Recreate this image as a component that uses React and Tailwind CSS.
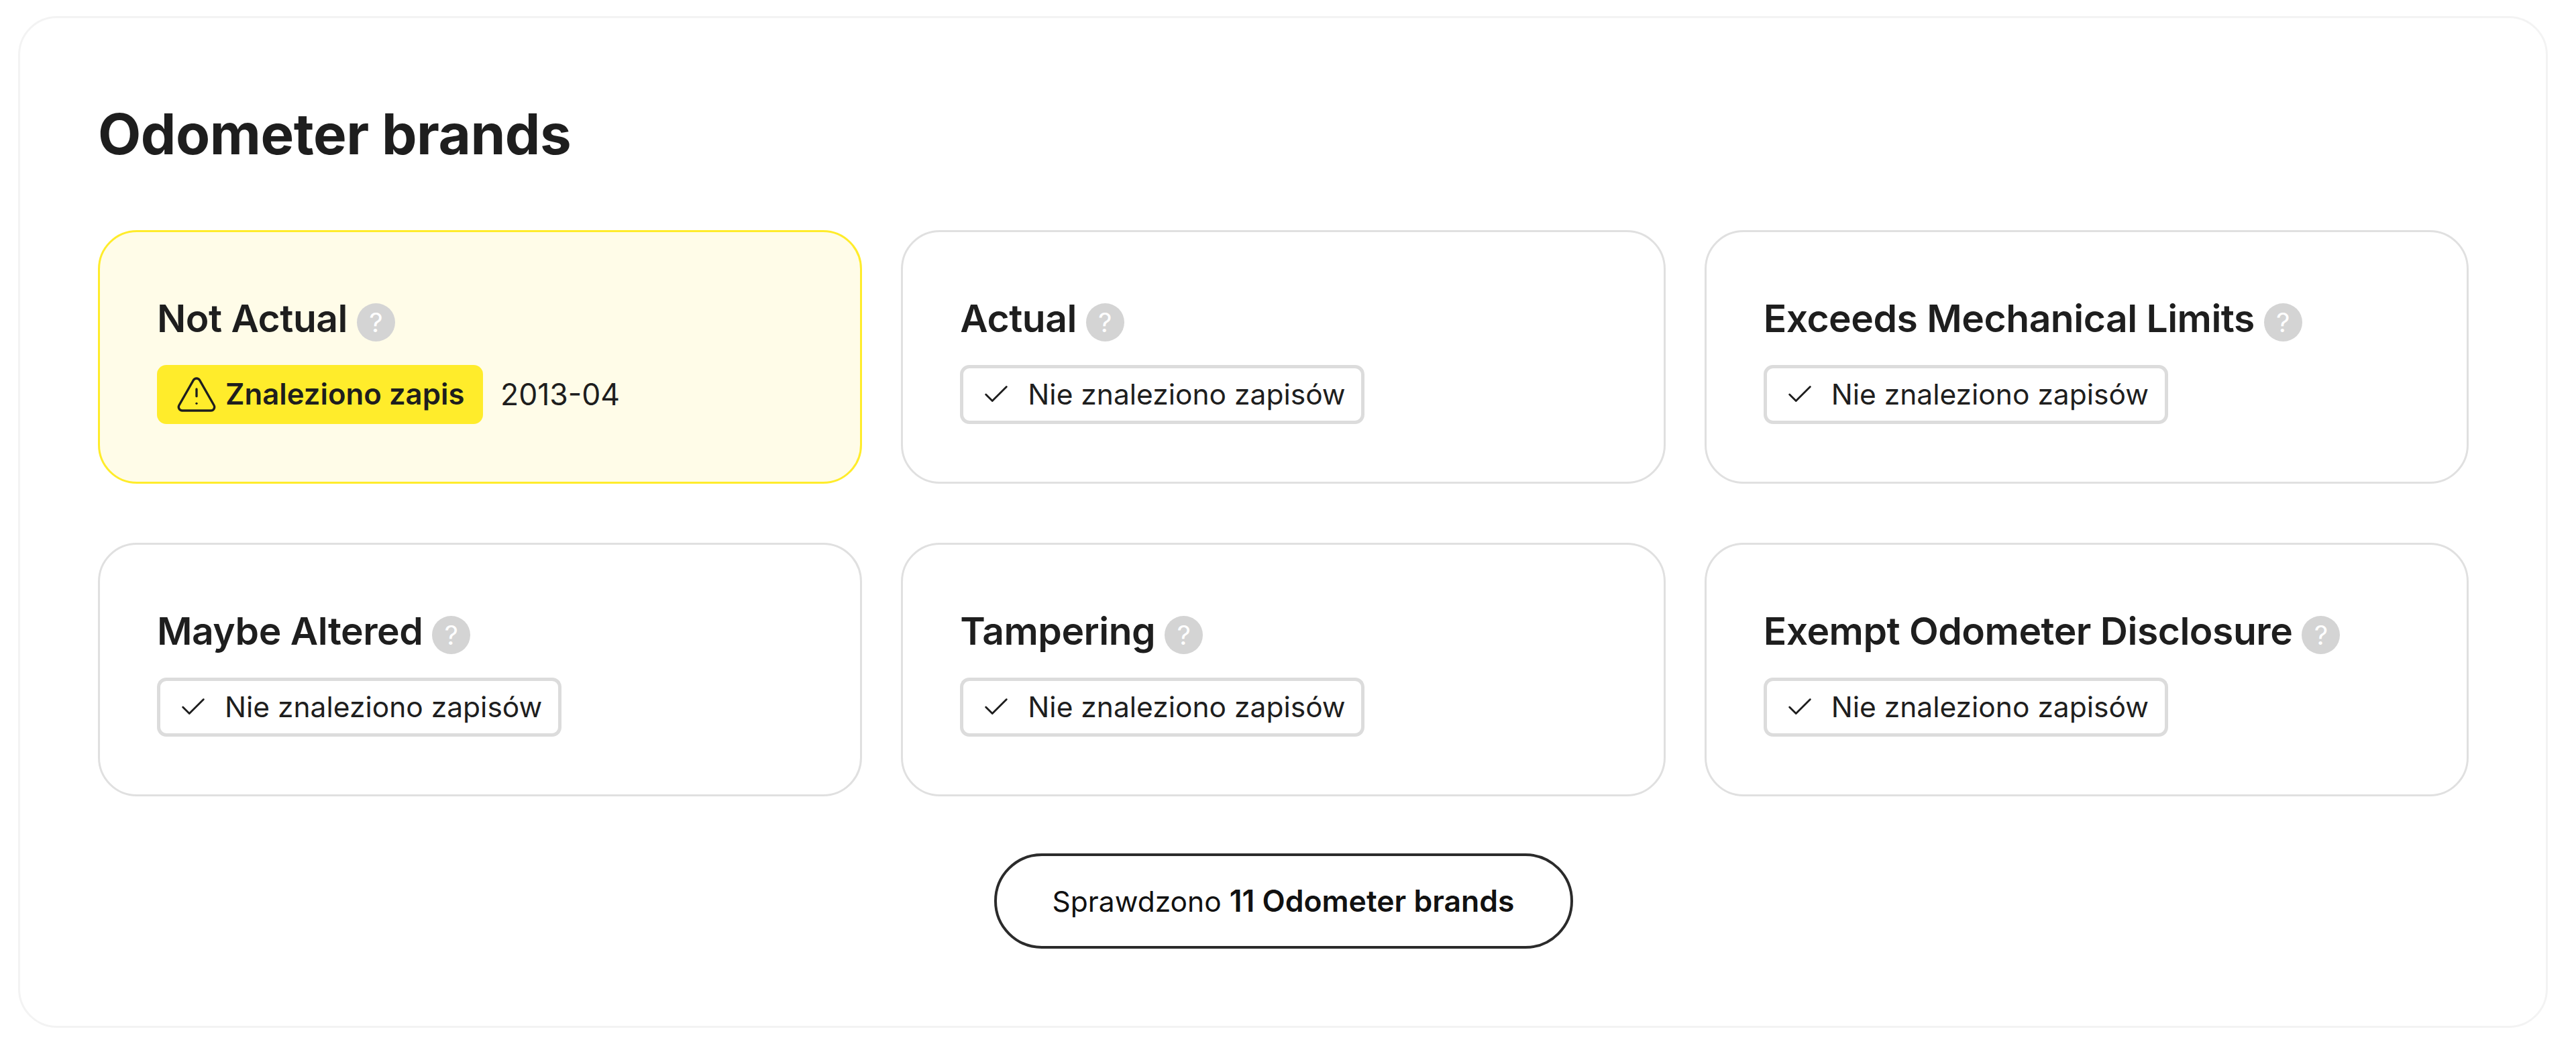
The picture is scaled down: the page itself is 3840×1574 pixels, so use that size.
import { Check, TriangleAlert } from "lucide-react";

const brands = [
  { name: "Not Actual", found: true, date: "2013-04" },
  { name: "Actual" },
  { name: "Exceeds Mechanical Limits" },
  { name: "Maybe Altered" },
  { name: "Tampering" },
  { name: "Exempt Odometer Disclosure" },
];

function HelpDot() {
  return (
    <span className="flex h-[57px] w-[57px] shrink-0 items-center justify-center rounded-full bg-[#d4d4d4] text-[40px] font-normal leading-none text-white">
      ?
    </span>
  );
}

function BrandCard({ name, found, date }) {
  return (
    <div
      className={`flex h-[378px] flex-col rounded-[58px] border-[3px] pl-[85px] pt-[106px] ${
        found ? "border-[#ffec2b] bg-[#fffce8]" : "border-[#e0e0e0] bg-white"
      }`}
    >
      <div className="flex h-[57px] items-start gap-[14px]">
        <span className="text-[57px] font-semibold leading-[46px] tracking-[-0.5px] text-[#1e1e1e]">{name}</span>
        <HelpDot />
      </div>
      <div className="mt-[35px] flex items-center gap-[26px]">
        {found ? (
          <span className="flex h-[88px] w-[486px] items-center gap-[11px] rounded-[14px] bg-[#ffec2b] pl-[27px] text-[43.7px] font-semibold text-[#1e1e1e]">
            <TriangleAlert size={64} strokeWidth={1.25} />
            Znaleziono zapis
          </span>
        ) : (
          <span className="flex h-[88px] w-[603px] items-center gap-[24px] rounded-[14px] border-[5px] border-[#dcdcdc] bg-white pl-[26px] text-[42.5px] text-[#1e1e1e]">
            <Check size={46} strokeWidth={1.5} />
            Nie znaleziono zapisów
          </span>
        )}
        {date && <span className="text-[44.5px] text-[#1e1e1e]">{date}</span>}
      </div>
    </div>
  );
}

export default function App() {
  return (
    <div className="min-h-screen bg-white pl-[27px] pr-[42px] pt-[24px] font-['Inter',sans-serif]">
      <div className="h-[1508px] rounded-[58px] border-[3px] border-[#f3f3f3] pl-[116px] pr-[115px] pt-[128px]">
        <h1 className="pt-[2px] text-[83.5px] font-bold leading-[86px] tracking-[-0.5px] text-[#1e1e1e]">Odometer brands</h1>
        <div className="mt-[100px] grid grid-cols-3 gap-x-[58px] gap-y-[88px]">
          {brands.map((brand) => (
            <BrandCard key={brand.name} {...brand} />
          ))}
        </div>
        <div className="mt-[85px] flex justify-center">
          <div className="flex h-[142px] w-[863px] items-center justify-center rounded-full border-[4px] border-[#2b2b2b] text-[42.5px] text-[#111111]">
            <span>
              Sprawdzono <strong className="text-[44.5px] font-semibold">11 Odometer brands</strong>
            </span>
          </div>
        </div>
      </div>
    </div>
  );
}
